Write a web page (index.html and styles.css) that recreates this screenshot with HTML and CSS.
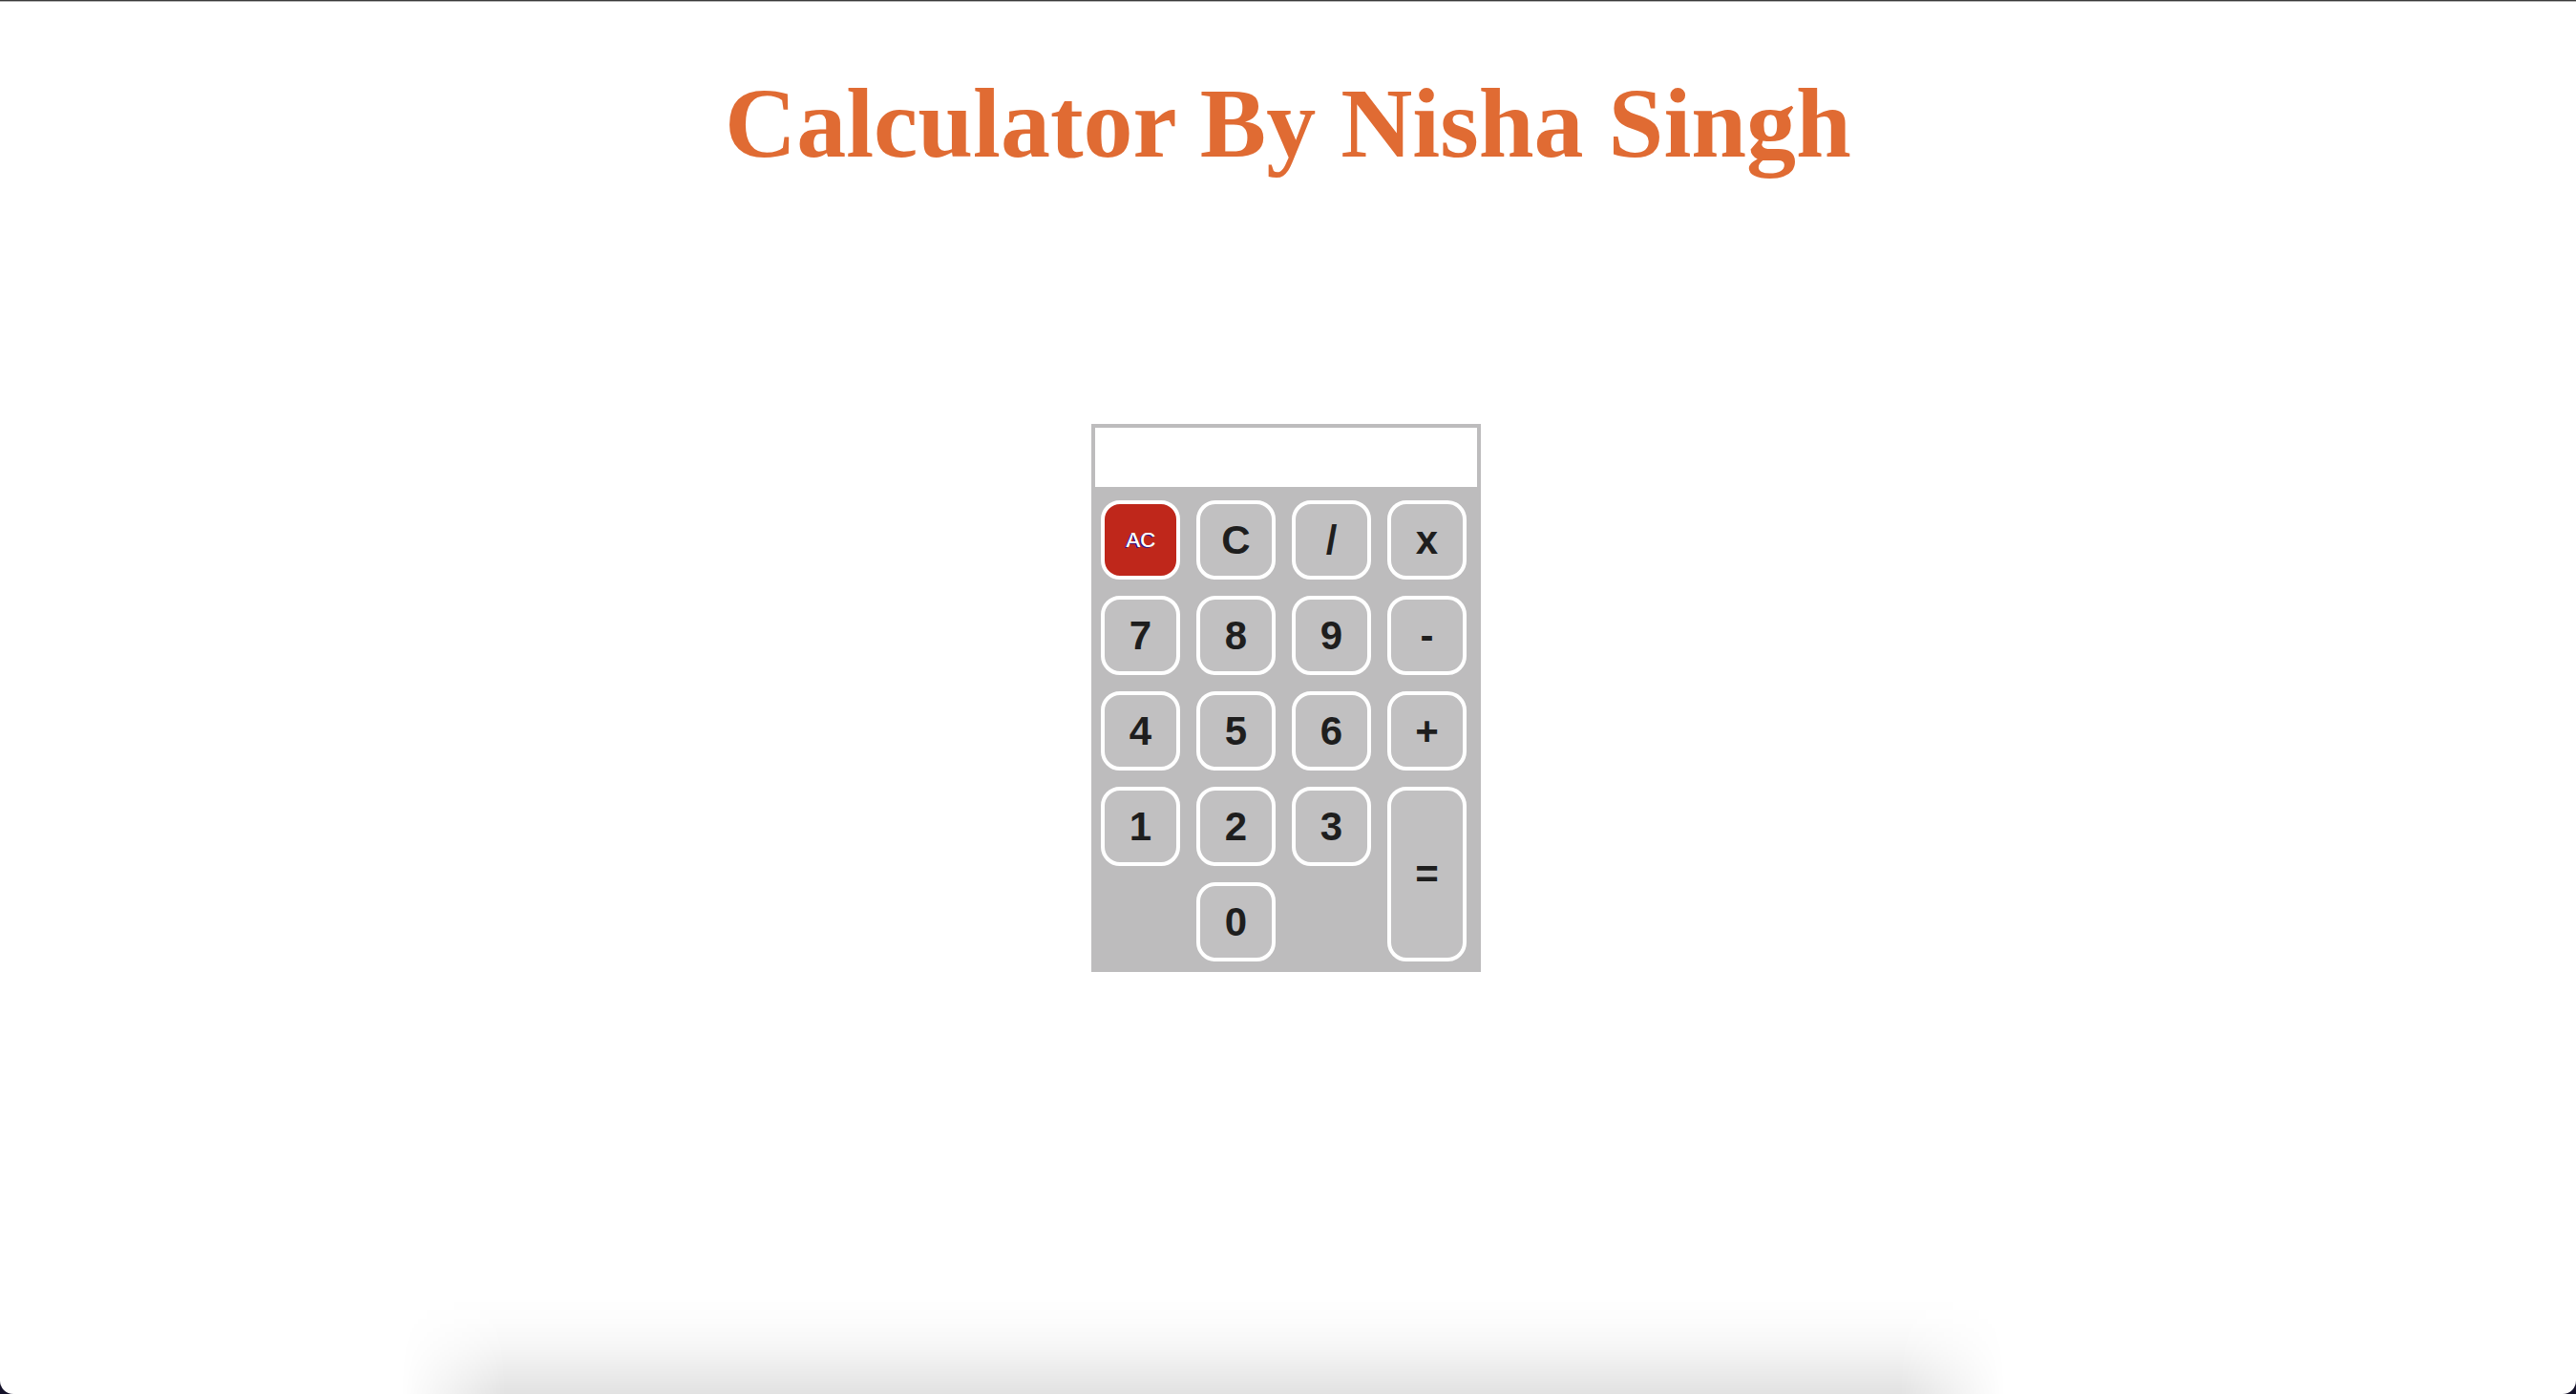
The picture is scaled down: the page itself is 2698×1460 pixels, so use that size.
FILE: index.html
```html
<!DOCTYPE html>
<html lang="en">
<head>
<meta charset="utf-8">
<title>Calculator By Nisha Singh</title>
<link rel="stylesheet" href="styles.css">
</head>
<body>
<div class="topline"></div>
<h1 class="title">Calculator By Nisha Singh</h1>
<div class="calc">
  <input class="display" type="text" value="">
  <div class="keys">
    <button class="key key-ac">AC</button>
    <button class="key">C</button>
    <button class="key">/</button>
    <button class="key">x</button>
    <button class="key">7</button>
    <button class="key">8</button>
    <button class="key">9</button>
    <button class="key">-</button>
    <button class="key">4</button>
    <button class="key">5</button>
    <button class="key">6</button>
    <button class="key">+</button>
    <button class="key">1</button>
    <button class="key">2</button>
    <button class="key">3</button>
    <button class="key key-eq">=</button>
    <button class="key key-zero">0</button>
  </div>
</div>
<div class="dock-shadow"></div>
</body>
</html>
```
FILE: styles.css
```css
html {
  margin: 0;
  height: 100%;
  background: #15122a;
  overflow: hidden;
}
body {
  margin: 0;
  height: 1460px;
  background: #ffffff;
  border-radius: 0 0 14px 14px;
  overflow: hidden;
  position: relative;
}
.topline {
  height: 2px;
  background: linear-gradient(#3a3a3a 0 1px, #b5b5b5 1px 2px);
}
.title {
  margin: 67px 0 0;
  text-align: center;
  font-family: "Liberation Serif", "Times New Roman", serif;
  font-weight: bold;
  font-size: 104px;
  line-height: 120px;
  color: #e06b33;
}
.calc {
  width: 408px;
  margin: 255px 0 0 calc(50% - 206px);
  background: #bdbcbd;
  display: flex;
  flex-direction: column;
}
.display {
  box-sizing: border-box;
  width: 408px;
  height: 70px;
  margin: 0;
  border: 4px solid #bdbcbd;
  background: #ffffff;
  outline: none;
  padding: 0 8px;
  font-family: "Liberation Sans", Arial, sans-serif;
  font-size: 36px;
}
.keys {
  display: grid;
  grid-template-columns: repeat(4, 83px);
  grid-auto-rows: 83px;
  gap: 17px;
  padding: 10px 15px 11px 10px;
}
.key {
  box-sizing: border-box;
  margin: 0;
  padding: 0;
  border: 4px solid #ffffff;
  border-radius: 20px;
  background: #c1c0c1;
  color: #1e1e1e;
  font-family: "Liberation Sans", Arial, sans-serif;
  font-weight: bold;
  font-size: 42px;
  line-height: 1;
}
.key-ac {
  background: #bf271b;
  color: #ffffff;
  font-size: 22px;
  font-weight: normal;
  text-shadow: -1.5px 1px 0 #35107a, 0.5px 0 0 #ffffff;
}
.key-eq {
  grid-column: 4;
  grid-row: 4 / span 2;
}
.key-zero {
  grid-column: 2;
  grid-row: 5;
}
.dock-shadow {
  position: absolute;
  left: 420px;
  width: 1680px;
  bottom: 0;
  height: 100px;
  background: linear-gradient(to bottom,
    rgba(0, 0, 0, 0) 0%,
    rgba(0, 0, 0, 0.01) 25%,
    rgba(0, 0, 0, 0.035) 50%,
    rgba(0, 0, 0, 0.075) 75%,
    rgba(0, 0, 0, 0.115) 100%);
  -webkit-mask-image: linear-gradient(to right, transparent 0, #000 110px, #000 calc(100% - 110px), transparent 100%);
  mask-image: linear-gradient(to right, transparent 0, #000 110px, #000 calc(100% - 110px), transparent 100%);
  pointer-events: none;
}
```
